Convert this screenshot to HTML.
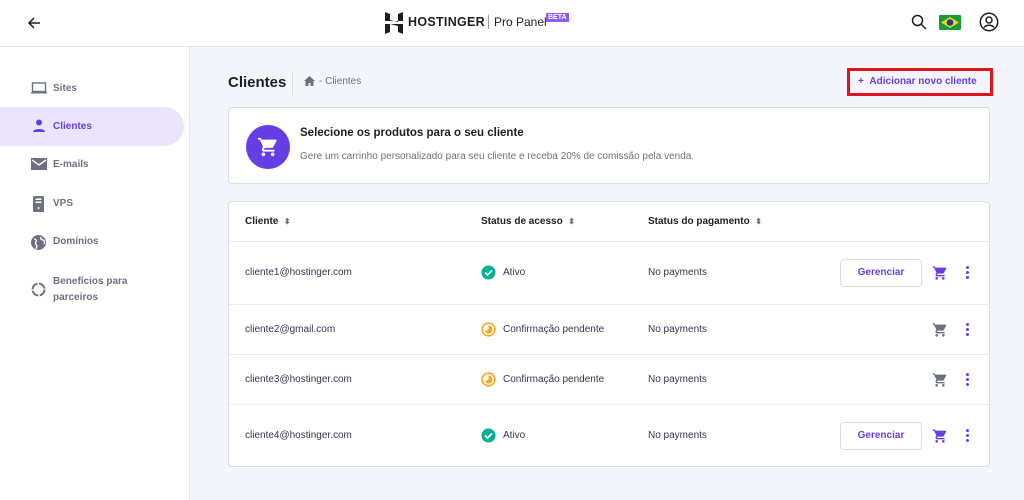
<!DOCTYPE html>
<html><head><meta charset="utf-8"><style>
*{box-sizing:border-box;margin:0;padding:0}
body{width:1024px;height:500px;overflow:hidden;background:#f4f4fb;font-family:"Liberation Sans",sans-serif;color:#1d1e20;position:relative}
.abs{position:absolute}
.hdr{left:0;top:0;width:1024px;height:47px;background:#fff;border-bottom:1px solid #e4e4ea}
.side{left:0;top:47px;width:190px;height:453px;background:#fff;border-right:1px solid #e4e4ea}
.nav{position:absolute;left:53px;font-size:10px;font-weight:bold;color:#6d7081}
.ic{position:absolute;left:31px}
.card{background:#fff;border:1px solid #dadce0;border-radius:4px}
.cell{position:absolute;font-size:10px;color:#36344d}
.row{position:absolute;left:0;width:762px;border-top:1px solid #ececf0}
.btn{position:absolute;left:611px;width:82px;height:28px;border:1px solid #dadce0;border-radius:4px;font-size:10px;font-weight:bold;color:#673de6;text-align:center;line-height:26px}
.dots{position:absolute;left:737px;width:3px}
.dots i{display:block;width:3px;height:3px;border-radius:50%;background:#673de6;margin-bottom:2px}
</style></head><body>
<div class="abs hdr">
 <svg class="abs" style="left:27px;top:16px" width="14" height="14" viewBox="0 0 14 14"><path d="M13 7H2M7 2L2 7l5 5" stroke="#1d1e20" stroke-width="1.5" fill="none"/></svg>
 <svg class="abs" style="left:385px;top:12px" width="18" height="22" viewBox="0 0 18 22"><path d="M0 0l5 2v6l8 2V2l5-2v9H0z M0 12h18v10l-5-2v-6l-8-2v8l-5 2z" fill="#1d1e20"/></svg>
 <div class="abs" style="left:408px;top:15px;font-size:12.5px;font-weight:bold;letter-spacing:.3px">HOSTINGER</div>
 <div class="abs" style="left:488px;top:15px;width:1px;height:14px;background:#999"></div>
 <div class="abs" style="left:494px;top:15px;font-size:12px;color:#1d1e20">Pro Panel</div>
 <div class="abs" style="left:546px;top:13px;font-size:7px;font-weight:bold;color:#fff;background:#8c5cf5;padding:0 2px;line-height:9px">BETA</div>
 <svg class="abs" style="left:911px;top:14px" width="16" height="16" viewBox="0 0 16 16"><circle cx="6.5" cy="6.5" r="5" stroke="#1d1e20" stroke-width="1.5" fill="none"/><path d="M10 10l5 5" stroke="#1d1e20" stroke-width="1.5"/></svg>
 <svg class="abs" style="left:939px;top:15px" width="22" height="15" viewBox="0 0 22 15"><rect width="22" height="15" rx="1" fill="#1a9a3a"/><path d="M11 2l9 5.5-9 5.5-9-5.5z" fill="#f7d417"/><circle cx="11" cy="7.5" r="3.3" fill="#1c3f94"/></svg>
 <svg class="abs" style="left:979px;top:12px" width="20" height="20" viewBox="0 0 20 20"><circle cx="10" cy="10" r="8.7" stroke="#1d1e20" stroke-width="1.5" fill="none"/><circle cx="10" cy="8" r="3" stroke="#1d1e20" stroke-width="1.5" fill="none"/><path d="M5 15.5c2-3 8-3 10 0" stroke="#1d1e20" stroke-width="1.5" fill="none"/></svg>
</div>
<div class="abs side">
 <div class="abs" style="left:0;top:60px;width:184px;height:39px;background:#ebe4ff;border-radius:0 20px 20px 0"></div>
 <svg class="ic" style="top:35px" width="16" height="12" viewBox="0 0 16 12"><rect x="1.5" y="1" width="13" height="8.5" stroke="#6d7081" stroke-width="1.4" fill="none"/><rect x="0" y="10" width="16" height="1.5" fill="#6d7081"/></svg>
 <div class="nav" style="top:36px">Sites</div>
 <svg class="ic" style="top:72px" width="16" height="14" viewBox="0 0 16 14"><circle cx="8" cy="3.5" r="3" fill="#673de6"/><path d="M2 13c0-4 12-4 12 0z" fill="#673de6"/></svg>
 <div class="nav" style="top:74px;color:#673de6">Clientes</div>
 <svg class="ic" style="top:111px" width="16" height="12" viewBox="0 0 16 12"><rect width="16" height="12" fill="#6d7081"/><path d="M1 2l7 5 7-5" stroke="#fff" stroke-width="1.4" fill="none"/></svg>
 <div class="nav" style="top:112px">E-mails</div>
 <svg class="ic" style="top:149px;left:33px" width="11" height="16" viewBox="0 0 11 16"><rect width="11" height="16" rx="1" fill="#6d7081"/><rect x="2.5" y="2.5" width="6" height="1.5" fill="#fff"/><rect x="2.5" y="5.5" width="6" height="1.5" fill="#fff"/><circle cx="5.5" cy="12" r="1" fill="#fff"/></svg>
 <div class="nav" style="top:151px">VPS</div>
 <svg class="ic" style="top:188px" width="15" height="15" viewBox="0 0 15 15"><circle cx="7.5" cy="7.5" r="7.5" fill="#6d7081"/><path d="M3 4c2 0 3 2 2 3s0 3 1 4l-1 3M10 2c-1 2 1 3 2 3s2 2 1 4" stroke="#fff" stroke-width="1.3" fill="none"/></svg>
 <div class="nav" style="top:189px">Domínios</div>
 <svg class="ic" style="top:235px" width="15" height="15" viewBox="0 0 15 15"><circle cx="7.5" cy="7.5" r="6" stroke="#6d7081" stroke-width="2" fill="none" stroke-dasharray="8 1.5"/></svg>
 <div class="nav" style="top:227px;line-height:16px">Benefícios para<br>parceiros</div>
</div>
<div class="abs" style="left:228px;top:74px;font-size:15px;font-weight:bold">Clientes</div>
<div class="abs" style="left:292px;top:71px;width:1px;height:24px;background:#dadce0"></div>
<svg class="abs" style="left:304px;top:76px" width="11" height="10" viewBox="0 0 11 10"><path d="M5.5 0L0 5h1.5v5h3V7h2v3h3V5H11z" fill="#6d7081"/></svg>
<div class="abs" style="left:319px;top:76px;font-size:10px;color:#6d7081">- Clientes</div>
<div class="abs" style="left:847px;top:68px;width:146px;height:28px;border:3px solid #e0141e"></div>
<div class="abs" style="left:858px;top:76px;font-size:10px;font-weight:bold;color:#673de6">+&nbsp;&nbsp;Adicionar novo cliente</div>
<div class="abs card" style="left:228px;top:107px;width:762px;height:77px">
 <div class="abs" style="left:17px;top:17px;width:44px;height:44px;border-radius:50%;background:#673de6"></div>
 <svg class="abs" style="left:28px;top:28px" width="22" height="22" viewBox="0 0 24 24"><path d="M7 18c-1.1 0-2 .9-2 2s.9 2 2 2 2-.9 2-2-.9-2-2-2zM1 2v2h2l3.6 7.6-1.4 2.4C5.1 15.3 6 17 7.4 17H19v-2H7.4l1.1-2h7.5c.8 0 1.4-.4 1.7-1l3.6-6.5C21.7 4.8 21.2 4 20.4 4H5.2l-.9-2H1zm16 16c-1.1 0-2 .9-2 2s.9 2 2 2 2-.9 2-2-.9-2-2-2z" fill="#fff"/></svg>
 <div class="abs" style="left:71px;top:19px;font-size:11.5px;font-weight:bold">Selecione os produtos para o seu cliente</div>
 <div class="abs" style="left:71px;top:43px;font-size:10px;color:#6d7081">Gere um carrinho personalizado para seu cliente e receba 20% de comissão pela venda.</div>
</div>
<div class="abs card" style="left:228px;top:201px;width:762px;height:266px">
 <div class="cell" style="left:16px;top:14px;font-weight:bold;color:#1d1e20">Cliente &nbsp;<span style="font-size:8px;color:#6d7081">⬍</span></div>
 <div class="cell" style="left:252px;top:14px;font-weight:bold;color:#1d1e20">Status de acesso &nbsp;<span style="font-size:8px;color:#6d7081">⬍</span></div>
 <div class="cell" style="left:419px;top:14px;font-weight:bold;color:#1d1e20">Status do pagamento &nbsp;<span style="font-size:8px;color:#6d7081">⬍</span></div>
 <div class="row" style="top:39px;height:63px">
  <div class="cell" style="left:16px;top:25px">cliente1@hostinger.com</div>
  <svg class="abs" style="left:252px;top:23px" width="15" height="15" viewBox="0 0 15 15"><circle cx="7.5" cy="7.5" r="7" fill="#00b090"/><path d="M4 7.5l2.5 2.5 4.5-4.5" stroke="#fff" stroke-width="1.7" fill="none"/></svg>
  <div class="cell" style="left:274px;top:25px">Ativo</div>
  <div class="cell" style="left:419px;top:25px">No payments</div>
  <div class="btn" style="top:17px">Gerenciar</div>
  <svg class="abs" style="left:703px;top:23px" width="16" height="16" viewBox="0 0 24 24"><path d="M7 18c-1.1 0-2 .9-2 2s.9 2 2 2 2-.9 2-2-.9-2-2-2zM1 2v2h2l3.6 7.6-1.4 2.4C5.1 15.3 6 17 7.4 17H19v-2H7.4l1.1-2h7.5c.8 0 1.4-.4 1.7-1l3.6-6.5C21.7 4.8 21.2 4 20.4 4H5.2l-.9-2H1zm16 16c-1.1 0-2 .9-2 2s.9 2 2 2 2-.9 2-2-.9-2-2-2z" fill="#673de6"/></svg>
  <div class="dots" style="top:24px"><i></i><i></i><i></i></div>
 </div>
 <div class="row" style="top:102px;height:50px">
  <div class="cell" style="left:16px;top:19px">cliente2@gmail.com</div>
  <svg class="abs" style="left:252px;top:17px" width="15" height="15" viewBox="0 0 15 15"><circle cx="7.5" cy="7.5" r="6.3" stroke="#ffa31a" stroke-width="1.6" fill="none"/><path d="M7.5 3.5a4 4 0 1 1-3.5 6L7.5 7.5z" fill="#ffa31a"/></svg>
  <div class="cell" style="left:274px;top:19px">Confirmação pendente</div>
  <div class="cell" style="left:419px;top:19px">No payments</div>
  <svg class="abs" style="left:703px;top:17px" width="16" height="16" viewBox="0 0 24 24"><path d="M7 18c-1.1 0-2 .9-2 2s.9 2 2 2 2-.9 2-2-.9-2-2-2zM1 2v2h2l3.6 7.6-1.4 2.4C5.1 15.3 6 17 7.4 17H19v-2H7.4l1.1-2h7.5c.8 0 1.4-.4 1.7-1l3.6-6.5C21.7 4.8 21.2 4 20.4 4H5.2l-.9-2H1zm16 16c-1.1 0-2 .9-2 2s.9 2 2 2 2-.9 2-2-.9-2-2-2z" fill="#6d7081"/></svg>
  <div class="dots" style="top:18px"><i></i><i></i><i></i></div>
 </div>
 <div class="row" style="top:152px;height:50px">
  <div class="cell" style="left:16px;top:19px">cliente3@hostinger.com</div>
  <svg class="abs" style="left:252px;top:17px" width="15" height="15" viewBox="0 0 15 15"><circle cx="7.5" cy="7.5" r="6.3" stroke="#ffa31a" stroke-width="1.6" fill="none"/><path d="M7.5 3.5a4 4 0 1 1-3.5 6L7.5 7.5z" fill="#ffa31a"/></svg>
  <div class="cell" style="left:274px;top:19px">Confirmação pendente</div>
  <div class="cell" style="left:419px;top:19px">No payments</div>
  <svg class="abs" style="left:703px;top:17px" width="16" height="16" viewBox="0 0 24 24"><path d="M7 18c-1.1 0-2 .9-2 2s.9 2 2 2 2-.9 2-2-.9-2-2-2zM1 2v2h2l3.6 7.6-1.4 2.4C5.1 15.3 6 17 7.4 17H19v-2H7.4l1.1-2h7.5c.8 0 1.4-.4 1.7-1l3.6-6.5C21.7 4.8 21.2 4 20.4 4H5.2l-.9-2H1zm16 16c-1.1 0-2 .9-2 2s.9 2 2 2 2-.9 2-2-.9-2-2-2z" fill="#6d7081"/></svg>
  <div class="dots" style="top:18px"><i></i><i></i><i></i></div>
 </div>
 <div class="row" style="top:202px;height:63px">
  <div class="cell" style="left:16px;top:25px">cliente4@hostinger.com</div>
  <svg class="abs" style="left:252px;top:23px" width="15" height="15" viewBox="0 0 15 15"><circle cx="7.5" cy="7.5" r="7" fill="#00b090"/><path d="M4 7.5l2.5 2.5 4.5-4.5" stroke="#fff" stroke-width="1.7" fill="none"/></svg>
  <div class="cell" style="left:274px;top:25px">Ativo</div>
  <div class="cell" style="left:419px;top:25px">No payments</div>
  <div class="btn" style="top:17px">Gerenciar</div>
  <svg class="abs" style="left:703px;top:23px" width="16" height="16" viewBox="0 0 24 24"><path d="M7 18c-1.1 0-2 .9-2 2s.9 2 2 2 2-.9 2-2-.9-2-2-2zM1 2v2h2l3.6 7.6-1.4 2.4C5.1 15.3 6 17 7.4 17H19v-2H7.4l1.1-2h7.5c.8 0 1.4-.4 1.7-1l3.6-6.5C21.7 4.8 21.2 4 20.4 4H5.2l-.9-2H1zm16 16c-1.1 0-2 .9-2 2s.9 2 2 2 2-.9 2-2-.9-2-2-2z" fill="#673de6"/></svg>
  <div class="dots" style="top:24px"><i></i><i></i><i></i></div>
 </div>
</div>
</body></html>
